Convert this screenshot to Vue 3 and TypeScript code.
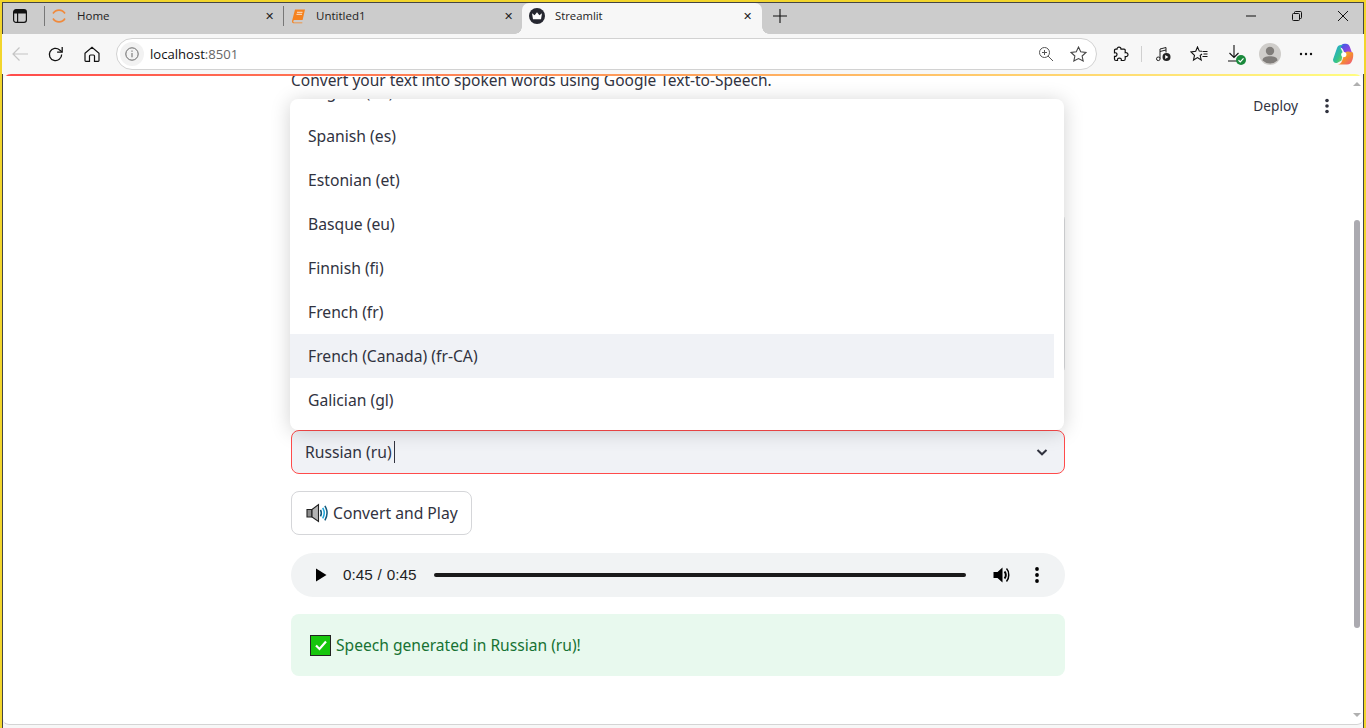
<script setup lang="ts">
const options = [
  { label: 'Spanish (es)' },
  { label: 'Estonian (et)' },
  { label: 'Basque (eu)' },
  { label: 'Finnish (fi)' },
  { label: 'French (fr)' },
  { label: 'French (Canada) (fr-CA)', active: true },
  { label: 'Galician (gl)' },
]
</script>

<template>
  <div class="window">
    <div class="tabstrip">
      <button class="strip-btn">
        <svg width="16" height="16" viewBox="0 0 16 16" fill="none" stroke="#111" stroke-width="1.2">
          <rect x="1.6" y="1.6" width="12.8" height="12.8" rx="2.4" />
          <path d="M1.6 5h12.8M5.6 5v9.4" />
          <path d="M2 2h12v3H2z" fill="#111" stroke="none" />
        </svg>
      </button>
      <div class="tab-sep"></div>
      <div class="tab tab-home">
        <svg class="favicon" width="16" height="16" viewBox="0 0 16 16" fill="none" stroke="#f08a3c" stroke-width="1.6">
          <path d="M2 5.5a7 7 0 0 1 12 0" />
          <path d="M2 10.5a7 7 0 0 0 12 0" />
        </svg>
        <span class="tab-title">Home</span>
        <span class="tab-x">✕</span>
      </div>
      <div class="tab-sep"></div>
      <div class="tab tab-nb">
        <svg class="favicon" width="16" height="16" viewBox="0 0 16 16">
          <path d="M4 1.5h10l-2.4 10.5H3.4a1.4 1.4 0 0 0-.6 2.5h8.6l-.2.8H2.6C1.4 15.300 .8 14 1.100 12.800z" fill="#f5821f" />
          <path d="M6 4.300h5.500M5.500 6.300h5.500" stroke="#fff" stroke-width=".8" />
        </svg>
        <span class="tab-title">Untitled1</span>
        <span class="tab-x">✕</span>
      </div>
      <div class="tab tab-active">
        <svg class="favicon" width="16" height="16" viewBox="0 0 16 16">
          <circle cx="8" cy="8" r="8" fill="#262730" />
          <path d="M3 5.300l2.600 2 2.400-3 2.400 3 2.600-2-1 6H4z" fill="#fff" />
        </svg>
        <span class="tab-title">Streamlit</span>
        <span class="tab-x">✕</span>
      </div>
      <button class="new-tab">
        <svg width="14" height="14" viewBox="0 0 14 14" stroke="#111" stroke-width="1.100">
          <path d="M7 0v14M0 7h14" />
        </svg>
      </button>
      <div class="win-controls">
        <svg width="10" height="10" viewBox="0 0 10 10" stroke="#111"><path d="M0 5h10" /></svg>
        <svg width="10" height="10" viewBox="0 0 10 10" fill="none" stroke="#111">
          <rect x=".5" y="2.500" width="7" height="7" rx="1" />
          <path d="M2.500 2.500V1.500a1 1 0 0 1 1-1h5a1 1 0 0 1 1 1v5a1 1 0 0 1-1 1h-1" />
        </svg>
        <svg width="10" height="10" viewBox="0 0 10 10" stroke="#111"><path d="M0 0l10 10M10 0L0 10" /></svg>
      </div>
    </div>

    <div class="toolbar">
      <svg class="nav nav-back" width="16" height="16" viewBox="0 0 16 16" fill="none" stroke="#c4c4c4" stroke-width="1.200">
        <path d="M16 8H1M7.500 1.500L1 8l6.500 6.500" />
      </svg>
      <svg class="nav nav-reload" width="17" height="17" viewBox="0 0 16 16" fill="none" stroke="#111" stroke-width="1.200">
        <path d="M13.800 8a5.800 5.800 0 1 1-1.900-4.300L14 5.500" />
        <path d="M14.300 1v4.800H9.500" />
      </svg>
      <svg class="nav nav-home" width="16" height="16" viewBox="0 0 16 16" fill="none" stroke="#111" stroke-width="1.200">
        <path d="M1 7.200L8 1.200l7 6v7.300a.8.800 0 0 1-.8.800H10.500V10a1 1 0 0 0-1-1h-3a1 1 0 0 0-1 1v5.300H1.800a.8.800 0 0 1-.8-.8z" />
      </svg>
      <div class="omnibox">
        <span class="site-info">
          <svg width="14" height="14" viewBox="0 0 14 14" fill="none" stroke="#666" stroke-width="1">
            <circle cx="7" cy="7" r="6.200" />
            <path d="M7 6v4.300M7 3.500v1.300" />
          </svg>
        </span>
        <span class="url">localhost<span class="url-port">:8501</span></span>
        <svg class="omni-zoom" width="16" height="16" viewBox="0 0 16 16" fill="none" stroke="#555" stroke-width="1">
          <circle cx="6.500" cy="6.500" r="5" />
          <path d="M10 10l5 5M4 6.500h5M6.500 4v5" />
        </svg>
        <svg class="omni-star" width="17" height="17" viewBox="0 0 16 16" fill="none" stroke="#444" stroke-width="1">
          <path d="M8 1l2.100 4.500 4.900.6-3.600 3.300 1 4.800L8 11.800l-4.400 2.400 1-4.800L1 6.100l4.900-.6z" />
        </svg>
      </div>
      <svg class="tool tool-ext" width="16" height="16" viewBox="0 0 16 16" fill="none" stroke="#111" stroke-width="1.200">
        <path d="M6 1.200c1.300 0 2 .9 2 2h3.200a1 1 0 0 1 1 1v2.500c1.600-.3 2.800.4 2.800 1.900s-1.200 2.200-2.800 1.900v2.500a1.500 1.500 0 0 1-1.500 1.500H8.300c.3-1.500-.5-2.400-1.900-2.400s-2.200.9-1.900 2.400H3a1.500 1.500 0 0 1-1.500-1.500v-2.600C3 10.500 4 9.700 4 8.500S3 6.500 1.500 6.800V4.200a1 1 0 0 1 1-1H4c0-1.100.7-2 2-2z" />
      </svg>
      <div class="tool-sep"></div>
      <svg class="tool tool-media" width="16" height="16" viewBox="0 0 16 16" fill="none" stroke="#222" stroke-width="1">
        <path d="M5 12.500V3l6-1.500v5" />
        <path d="M5 5.500l6-1.500" />
        <circle cx="3.300" cy="12.800" r="1.800" />
        <circle cx="11.500" cy="11" r="4" fill="#222" stroke="none" />
        <path d="M10.200 9l3.200 2-3.200 2z" fill="#fff" stroke="none" />
      </svg>
      <svg class="tool tool-fav" width="18" height="16" viewBox="0 0 18 16" fill="none" stroke="#111" stroke-width="1.100">
        <path d="M12 5.300L9.300 5.100 7.500 1 5.700 5.300 1 6l3.500 3.400-1 4.600 4-2.400 3.700 2.400-1-4.500 1.800-1.500" />
        <path d="M12.500 5.500h5M13.500 8h4M12.500 10.500h5" />
      </svg>
      <span class="tool-dl">
        <svg width="18" height="20" viewBox="0 0 18 20" fill="none" stroke="#111" stroke-width="1.100">
          <path d="M7 1v12M2.500 9L7 13.500 11.500 9M1 17h10" />
        </svg>
        <svg class="dl-badge" width="10" height="10" viewBox="0 0 10 10">
          <circle cx="5" cy="5" r="5" fill="#1a8a3c" />
          <path d="M2.500 5.200l1.800 1.700 3.200-3.500" fill="none" stroke="#fff" stroke-width="1.200" />
        </svg>
      </span>
      <span class="avatar">
        <svg width="22" height="22" viewBox="0 0 22 22">
          <circle cx="11" cy="11" r="11" fill="#cfcdca" />
          <circle cx="11" cy="8" r="4.200" fill="#807d7a" />
          <path d="M3.500 17.500c0-3 3.300-4.300 7.500-4.300s7.500 1.300 7.500 4.300a11 11 0 0 1-15 0z" fill="#807d7a" />
        </svg>
      </span>
      <svg class="tool tool-more" width="14" height="4" viewBox="0 0 14 4" fill="#111">
        <circle cx="2" cy="2" r="1.200" /><circle cx="7" cy="2" r="1.200" /><circle cx="12" cy="2" r="1.200" />
      </svg>
      <svg class="tool tool-copilot" width="22" height="22" viewBox="0 0 22 22">
        <defs>
          <linearGradient id="cpA" x1="0" y1="0" x2="1" y2="1">
            <stop offset="0" stop-color="#1f9fe8" /><stop offset=".6" stop-color="#35c48a" /><stop offset="1" stop-color="#a8d63a" />
          </linearGradient>
          <linearGradient id="cpB" x1="0" y1="0" x2="1" y2="1">
            <stop offset="0" stop-color="#2a5fe8" /><stop offset=".55" stop-color="#8a46e0" /><stop offset="1" stop-color="#e858b0" />
          </linearGradient>
          <linearGradient id="cpC" x1="0" y1="0" x2="1" y2="1">
            <stop offset="0" stop-color="#f4d030" /><stop offset=".55" stop-color="#f58a30" /><stop offset="1" stop-color="#ee4f8a" />
          </linearGradient>
        </defs>
        <path d="M8 4.500C8.700 2 10.300.8 12.500.8h1.300c2 0 3.300 1 4 3L21 12.500l-7 1-3-7c-.6-1.300-1.700-2-3-2z" fill="url(#cpB)" />
        <path d="M1 16.500L5 5c.6-1.700 2-3 4-3h3c-1.700 0-3 1-3.500 2.700L11 10l-1.500 7.500L5 20c-2.500.5-4-1-4-3.500z" fill="url(#cpA)" />
        <path d="M21 9.500c.4 2.500.4 4.500-.6 7.500-1 3-2.800 4.500-5.400 4.500H5.500c2 0 3.700-1 4.500-3.400L12.500 11c.6-1.700 1.700-2.500 3.500-2.500z" fill="url(#cpC)" />
        <circle cx="11.800" cy="11.500" r="2.600" fill="#fff" />
      </svg>
    </div>

    <div class="page">
      <div class="progress-line"></div>
      <div class="stage">
        <p class="subtitle">Convert your text into spoken words using Google Text-to-Speech.</p>
        <div class="text-input"></div>
        <div class="select">
          <span class="select-value">Russian (ru)<i class="caret"></i></span>
          <svg width="16" height="16" viewBox="0 0 16 16" fill="none" stroke="#31333f" stroke-width="2">
            <path d="M3.500 6l4.500 4.300L12.500 6" />
          </svg>
        </div>
        <button class="convert">
          <svg width="22" height="22" viewBox="0 0 22 22">
            <path d="M1 7.500h5V15H1z" fill="#8c8c8c" stroke="#222" stroke-width="1.100" />
            <path d="M6 7.500L12.500 2.500v17L6 15z" fill="#b4b4b4" stroke="#222" stroke-width="1.100" />
            <path d="M14.500 7.800c1 1.900 1 4.700 0 6.600" fill="none" stroke="#12597c" stroke-width="1.500" />
            <path d="M16.700 5.800c1.800 3.100 1.800 7.500 0 10.600" fill="none" stroke="#1aa5dc" stroke-width="1.500" />
            <path d="M18.900 3.800c2.600 4.400 2.600 10.200 0 14.600" fill="none" stroke="#12597c" stroke-width="1.500" />
          </svg>
          <span>Convert and Play</span>
        </button>
        <div class="audio">
          <svg class="audio-play" width="12" height="14" viewBox="0 0 12 14"><path d="M1 0.500L11.500 7 1 13.500z" fill="#000" /></svg>
          <span class="audio-time">0:45 / 0:45</span>
          <div class="audio-track"></div>
          <svg class="audio-vol" width="20" height="20" viewBox="0 0 20 20">
            <path d="M1.500 7v6h4l5 4.500v-15l-5 4.500z" fill="#000" />
            <path d="M12.500 6.500c1.800 1.800 1.800 5.200 0 7" fill="none" stroke="#000" stroke-width="2" />
            <path d="M14.500 3.500c3 3 3 10 0 13" fill="none" stroke="#000" stroke-width="1.500" />
          </svg>
          <svg class="audio-menu" width="6" height="16" viewBox="0 0 6 16" fill="#000">
            <circle cx="3" cy="2" r="1.900" /><circle cx="3" cy="8" r="1.900" /><circle cx="3" cy="14" r="1.900" />
          </svg>
        </div>
        <div class="success">
          <span class="check-box">
            <svg width="14" height="12" viewBox="0 0 14 12" fill="none" stroke="#fff" stroke-width="2.200">
              <path d="M2 6.500l3.500 3.500L12 2.500" />
            </svg>
          </span>
          <span>Speech generated in Russian (ru)!</span>
        </div>
      </div>

      <div class="header-actions">
        <span class="deploy">Deploy</span>
        <svg width="4" height="16" viewBox="0 0 4 16" fill="#31333f">
          <circle cx="2" cy="2.500" r="1.800" /><circle cx="2" cy="8" r="1.800" /><circle cx="2" cy="13.500" r="1.800" />
        </svg>
      </div>

      <div class="menu">
        <div class="menu-scroll">
          <div class="menu-peek">English (en)</div>
          <div v-for="opt in options" :key="opt.label" class="menu-item" :class="{ active: opt.active }">
            {{ opt.label }}
          </div>
        </div>
      </div>

      <div class="scrollbar">
        <span class="arrow up"></span>
        <div class="thumb-gutter"><div class="thumb"></div></div>
        <span class="arrow down"></span>
      </div>
    </div>
  </div>
</template>

<style scoped>
.window {
  width: 1366px;
  height: 728px;
  box-sizing: border-box;
  border-top: 2px solid #f2d52c;
  border-left: 2px solid #f2d52c;
  border-right: 2px solid #f2d52c;
  display: flex;
  flex-direction: column;
  background: #f7f7f7;
  font-family: "Open Sans", "Noto Sans", sans-serif;
  overflow: hidden;
  box-shadow: inset 1px 1px 0 #444, inset -1px 0 0 #444;
}
.tabstrip {
  height: 31px;
  margin: 1px 1px 0;
  padding-bottom: 6px;
  box-sizing: border-box;
  background: #cccccc;
  display: flex;
  align-items: center;
  flex-shrink: 0;
  position: relative;
}
.strip-btn {
  width: 34px;
  height: 25px;
  padding: 0;
  margin-right: 7px;
  border: 0;
  background: none;
  display: flex;
  align-items: center;
  justify-content: center;
}
.tab-sep {
  width: 1px;
  height: 20px;
  background: #777;
  flex-shrink: 0;
}
.tab {
  height: 25px;
  display: flex;
  align-items: center;
  box-sizing: border-box;
  font-size: 11.500px;
  color: #222;
  flex-shrink: 0;
}
.tab-home {
  width: 238px;
  padding: 0 9px 0 6px;
}
.tab-nb {
  width: 238px;
  padding: 0 9px 0 7px;
}
.tab-nb .tab-title {
  margin-left: 9px;
}
.tab-active {
  position: relative;
  width: 240px;
  height: 31px;
  align-self: flex-start;
  padding: 0 10px 6px 7px;
  background: #f7f7f7;
  border-radius: 7px 7px 0 0;
  font-size: 11.300px;
}
.tab-active::before,
.tab-active::after {
  content: "";
  position: absolute;
  bottom: 0;
  width: 7px;
  height: 7px;
}
.tab-active::before {
  left: -7px;
  background: radial-gradient(circle at 0 0, #cccccc 6.500px, #f7f7f7 7px);
}
.tab-active::after {
  right: -7px;
  background: radial-gradient(circle at 100% 0, #cccccc 6.500px, #f7f7f7 7px);
}
.favicon {
  flex-shrink: 0;
}
.tab-title {
  margin-left: 10px;
  flex: 1;
}
.tab-x {
  font-size: 11px;
  color: #222;
}
.new-tab {
  width: 36px;
  height: 25px;
  border: 0;
  padding: 0;
  background: none;
  display: flex;
  align-items: center;
  justify-content: center;
}
.win-controls {
  margin-left: auto;
  padding-right: 15px;
  display: flex;
  gap: 36px;
}
.toolbar {
  height: 40px;
  display: flex;
  align-items: center;
  flex-shrink: 0;
  background: #f7f7f7;
  position: relative;
}
.nav {
  flex-shrink: 0;
}
.nav-back {
  margin-left: 10px;
}
.nav-reload {
  margin-left: 19px;
}
.nav-home {
  margin-left: 20px;
}
.omnibox {
  width: 981px;
  height: 32px;
  margin-left: 16px;
  box-sizing: border-box;
  background: #fff;
  border: 1px solid #d2d2d2;
  border-radius: 16px;
  display: flex;
  align-items: center;
  padding-right: 9px;
  font-size: 13.100px;
  color: #111;
}
.site-info {
  width: 24px;
  height: 24px;
  margin-left: 3px;
  border-radius: 50%;
  background: #f2f2f2;
  display: flex;
  align-items: center;
  justify-content: center;
}
.url {
  margin-left: 6px;
  flex: 1;
}
.url-port {
  color: #666;
}
.omni-star {
  margin-left: 16px;
}
.tool {
  flex-shrink: 0;
}
.tool-ext {
  margin-left: 16px;
}
.tool-sep {
  width: 1px;
  height: 16px;
  background: #d0d0d0;
  margin-left: 12px;
}
.tool-media {
  margin-left: 13px;
}
.tool-fav {
  margin-left: 19px;
}
.tool-dl {
  margin-left: 19px;
  position: relative;
  display: flex;
  width: 22px;
  height: 20px;
}
.dl-badge {
  position: absolute;
  left: 9px;
  top: 11px;
}
.avatar {
  margin-left: 10px;
  display: flex;
}
.tool-more {
  margin-left: 18px;
}
.tool-copilot {
  margin-left: 19px;
}
.page {
  position: relative;
  flex: 1;
  margin: 0 1px 3px;
  min-height: 0;
  background: #fff;
  border-radius: 8px 8px 6px 6px;
  border-bottom: 1px solid #d4d4d4;
  overflow: hidden;
}
.progress-line {
  position: absolute;
  left: 0;
  right: 0;
  top: 0;
  height: 2px;
  background: linear-gradient(90deg, #ff4b4b, #ffa35c 50%, #fffd80);
  z-index: 3;
}
.stage {
  width: 774px;
  margin-left: 288px;
  display: flex;
  flex-direction: column;
  color: #31333f;
  font-family: "Noto Sans", sans-serif;
  font-size: 15.700px;
}
.subtitle {
  margin: -6px 0 0;
  line-height: 24px;
  font-size: 15.500px;
  white-space: nowrap;
}
.text-input {
  height: 163px;
  margin: 120px 0 55px;
  box-sizing: border-box;
  border: 1px solid #dcdde0;
  border-radius: 8px;
}
.select {
  height: 44px;
  box-sizing: border-box;
  border: 1px solid #ff4b4b;
  border-radius: 8px;
  background: #f0f2f6;
  display: flex;
  align-items: center;
  justify-content: space-between;
  padding: 0 14px 1px 13px;
}
.select-value {
  display: flex;
  align-items: center;
}
.caret {
  width: 1px;
  height: 22px;
  margin-left: 2px;
  background: #31333f;
}
.convert {
  align-self: flex-start;
  margin-top: 17px;
  height: 44px;
  width: 181px;
  box-sizing: border-box;
  border: 1px solid #d5d6d9;
  border-radius: 8px;
  background: #fff;
  color: #31333f;
  font: inherit;
  display: flex;
  align-items: center;
  gap: 5px;
  padding: 0 0 0 14px;
}
.audio {
  margin-top: 18px;
  height: 44px;
  border-radius: 22px;
  background: #f1f3f4;
  display: flex;
  align-items: center;
  padding: 0 25px 0 24px;
  color: #1f1f1f;
}
.audio-time {
  margin-left: 16px;
  font-family: "Liberation Sans", sans-serif;
  font-size: 15.300px;
  word-spacing: 0.600px;
  white-space: nowrap;
}
.audio-track {
  flex: 1;
  height: 4px;
  margin: 0 26px 0 17px;
  border-radius: 2px;
  background: #1a1a1a;
}
.audio-menu {
  margin-left: 22px;
}
.success {
  margin-top: 17px;
  height: 62px;
  border-radius: 8px;
  background: #e8f9ee;
  color: #177233;
  display: flex;
  align-items: center;
  gap: 5px;
  padding-left: 19px;
  font-size: 15.600px;
}
.check-box {
  width: 19px;
  height: 19px;
  background: #16c60c;
  border: 1px solid #222;
  display: flex;
  align-items: center;
  justify-content: center;
  flex-shrink: 0;
}
.header-actions {
  position: absolute;
  top: 22px;
  right: 34px;
  display: flex;
  align-items: center;
  gap: 27px;
  color: #31333f;
  font-family: "Noto Sans", sans-serif;
  font-size: 13.700px;
}
.menu {
  position: absolute;
  left: 287px;
  top: 25px;
  width: 774px;
  height: 331px;
  background: #fff;
  border-radius: 8px;
  box-shadow: 0 2px 20px rgba(0, 0, 0, 0.18);
  overflow: hidden;
  font-family: "Noto Sans", sans-serif;
  font-size: 15.700px;
  color: #31333f;
  z-index: 2;
}
.menu-scroll {
  margin-top: -29px;
}
.menu-item,
.menu-peek {
  height: 44px;
  display: flex;
  align-items: center;
  padding-left: 18px;
  margin-right: 10px;
}
.menu-item.active {
  background: #f0f2f6;
}
.scrollbar {
  position: absolute;
  right: 0;
  top: 2px;
  bottom: 0;
  width: 12px;
  display: flex;
  flex-direction: column;
  align-items: center;
}
.arrow {
  width: 0;
  height: 0;
  border-left: 4px solid transparent;
  border-right: 4px solid transparent;
  flex-shrink: 0;
}
.arrow.up {
  margin-top: 6px;
  border-bottom: 4px solid #b0b0b0;
}
.arrow.down {
  margin-bottom: 7px;
  border-top: 4px solid #b0b0b0;
}
.thumb-gutter {
  flex: 1;
}
.thumb {
  width: 6px;
  height: 408px;
  margin-top: 134px;
  border-radius: 3px;
  background: #abaab0;
}
</style>

<style>
html,
body {
  margin: 0;
  background: #fff;
}
</style>
